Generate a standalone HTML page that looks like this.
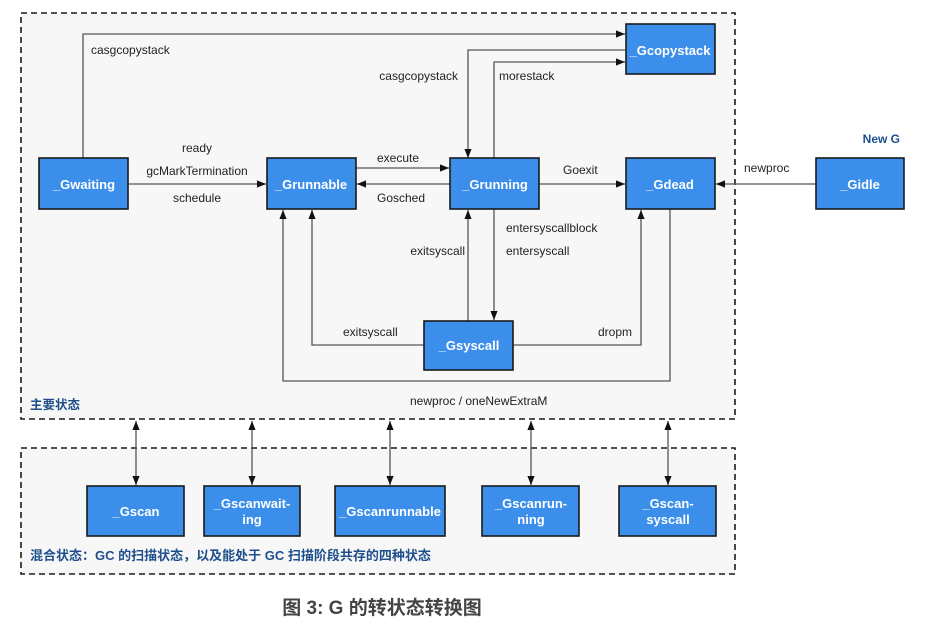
<!DOCTYPE html>
<html><head><meta charset="utf-8"><style>
html,body{margin:0;padding:0;background:#fff;}
svg{display:block;}
text{font-family:"Liberation Sans","Noto Sans CJK SC",sans-serif;}
.l{font-size:12px;fill:#222;}
.b{font-size:13px;fill:#fff;font-weight:bold;text-anchor:middle;}
.ln{stroke:#555;stroke-width:1.3;fill:none;}
.bx{fill:#3b8eea;stroke:#1a1a1a;stroke-width:1.6;}
</style></head><body>
<svg width="929" height="629" viewBox="0 0 929 629" xmlns="http://www.w3.org/2000/svg">
<defs><marker id="a" viewBox="0 0 10 10" refX="10" refY="5" markerWidth="7" markerHeight="7" orient="auto-start-reverse"><path d="M0,1 L10,5 L0,9 z" fill="#111"/></marker></defs>
<rect x="21" y="13" width="714" height="406" fill="#f7f7f7" stroke="#1a1a1a" stroke-width="1.6" stroke-dasharray="6,4"/>
<rect x="21" y="448" width="714" height="126" fill="#f7f7f7" stroke="#1a1a1a" stroke-width="1.6" stroke-dasharray="6,4"/>

<path class="ln" d="M83,158 V34 H625" marker-end="url(#a)"/>
<path class="ln" d="M625,50 H468 V158" marker-end="url(#a)"/>
<path class="ln" d="M494,158 V62 H625" marker-end="url(#a)"/>
<path class="ln" d="M128,184 H266" marker-end="url(#a)"/>
<path class="ln" d="M356,168 H449" marker-end="url(#a)"/>
<path class="ln" d="M450,184 H357" marker-end="url(#a)"/>
<path class="ln" d="M539,184 H625" marker-end="url(#a)"/>
<path class="ln" d="M816,184 H716" marker-end="url(#a)"/>
<path class="ln" d="M468,321 V210" marker-end="url(#a)"/>
<path class="ln" d="M494,209 V320" marker-end="url(#a)"/>
<path class="ln" d="M425,345 H312 V210" marker-end="url(#a)"/>
<path class="ln" d="M670,209 V381 H283 V210" marker-end="url(#a)"/>
<path class="ln" d="M513,345 H641 V210" marker-end="url(#a)"/>

<g class="ln" marker-start="url(#a)" marker-end="url(#a)">
<path d="M136,421 V485"/><path d="M252,421 V485"/><path d="M390,421 V485"/><path d="M531,421 V485"/><path d="M668,421 V485"/>
</g>

<rect class="bx" x="39" y="158" width="89" height="51"/><text class="b" x="84" y="189">_Gwaiting</text>
<rect class="bx" x="267" y="158" width="89" height="51"/><text class="b" x="311" y="189">_Grunnable</text>
<rect class="bx" x="450" y="158" width="89" height="51"/><text class="b" x="495" y="189">_Grunning</text>
<rect class="bx" x="626" y="158" width="89" height="51"/><text class="b" x="670" y="189">_Gdead</text>
<rect class="bx" x="816" y="158" width="88" height="51"/><text class="b" x="860" y="189">_Gidle</text>
<rect class="bx" x="626" y="24" width="89" height="50"/><text class="b" x="670" y="55">_Gcopystack</text>
<rect class="bx" x="424" y="321" width="89" height="49"/><text class="b" x="469" y="350">_Gsyscall</text>

<rect class="bx" x="87" y="486" width="97" height="50"/><text class="b" x="136" y="516">_Gscan</text>
<rect class="bx" x="204" y="486" width="96" height="50"/><text class="b" x="252" y="508">_Gscanwait-</text><text class="b" x="252" y="524">ing</text>
<rect class="bx" x="335" y="486" width="110" height="50"/><text class="b" x="390" y="516">_Gscanrunnable</text>
<rect class="bx" x="482" y="486" width="97" height="50"/><text class="b" x="531" y="508">_Gscanrun-</text><text class="b" x="531" y="524">ning</text>
<rect class="bx" x="619" y="486" width="97" height="50"/><text class="b" x="668" y="508">_Gscan-</text><text class="b" x="668" y="524">syscall</text>

<text class="l" x="91" y="54">casgcopystack</text>
<text class="l" x="458" y="80" text-anchor="end">casgcopystack</text>
<text class="l" x="499" y="80">morestack</text>
<text class="l" x="197" y="152" text-anchor="middle">ready</text>
<text class="l" x="197" y="175" text-anchor="middle">gcMarkTermination</text>
<text class="l" x="197" y="202" text-anchor="middle">schedule</text>
<text class="l" x="377" y="162">execute</text>
<text class="l" x="377" y="202">Gosched</text>
<text class="l" x="563" y="174">Goexit</text>
<text class="l" x="744" y="172">newproc</text>
<text x="900" y="143" text-anchor="end" style="font-size:12px;font-weight:bold;fill:#1e4f8c">New G</text>
<text class="l" x="506" y="232">entersyscallblock</text>
<text class="l" x="506" y="255">entersyscall</text>
<text class="l" x="465" y="255" text-anchor="end">exitsyscall</text>
<text class="l" x="343" y="336">exitsyscall</text>
<text class="l" x="598" y="336">dropm</text>
<text class="l" x="410" y="405">newproc / oneNewExtraM</text>
<text x="30" y="409" style="font-size:12.5px;font-weight:bold;fill:#1e4f8c">主要状态</text>
<text x="30" y="560" style="font-size:13px;font-weight:bold;fill:#1e4f8c">混合状态：GC 的扫描状态，以及能处于 GC 扫描阶段共存的四种状态</text>
<text x="382" y="614" text-anchor="middle" style="font-size:19px;font-weight:bold;fill:#444">图 3: G 的转状态转换图</text>
</svg>
</body></html>
